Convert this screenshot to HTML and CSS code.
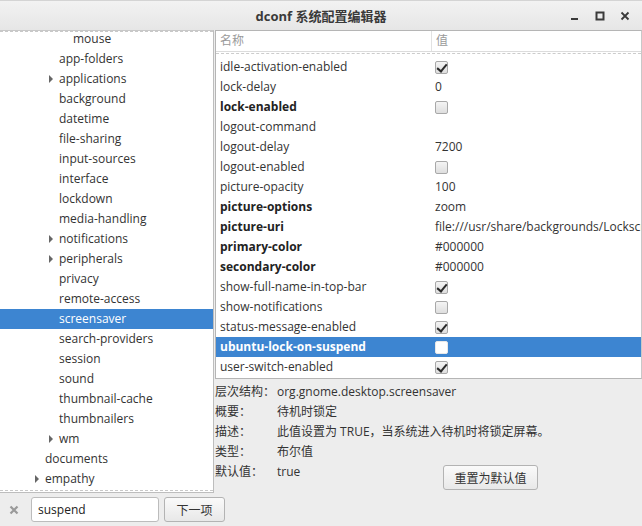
FILE: index.html
```html
<!DOCTYPE html>
<html>
<head>
<meta charset="utf-8">
<link rel="stylesheet" href="styles.css">
</head>
<body>
<div class="window">
  <div class="titlebar">
    <div class="title">dconf 系统配置编辑器</div>
    <div class="controls">
      <svg class="ctl" width="12" height="12" viewBox="0 0 12 12"><rect x="2" y="8" width="7" height="2" fill="#3a3a3a"/></svg>
      <svg class="ctl" width="12" height="12" viewBox="0 0 12 12"><rect x="2.5" y="2.5" width="7" height="7" fill="none" stroke="#3a3a3a" stroke-width="2"/></svg>
      <svg class="ctl" width="12" height="12" viewBox="0 0 12 12"><path d="M2.5 2.5 L9.5 9.5 M9.5 2.5 L2.5 9.5" stroke="#3a3a3a" stroke-width="1.8"/></svg>
    </div>
  </div>
  <div class="main">
    <div class="tree">
      <div class="tree-inner">
        <div class="row l4"><span class="exp"></span>mouse</div>
        <div class="row l3"><span class="exp"></span>app-folders</div>
        <div class="row l3"><span class="exp arrow"></span>applications</div>
        <div class="row l3"><span class="exp"></span>background</div>
        <div class="row l3"><span class="exp"></span>datetime</div>
        <div class="row l3"><span class="exp"></span>file-sharing</div>
        <div class="row l3"><span class="exp"></span>input-sources</div>
        <div class="row l3"><span class="exp"></span>interface</div>
        <div class="row l3"><span class="exp"></span>lockdown</div>
        <div class="row l3"><span class="exp"></span>media-handling</div>
        <div class="row l3"><span class="exp arrow"></span>notifications</div>
        <div class="row l3"><span class="exp arrow"></span>peripherals</div>
        <div class="row l3"><span class="exp"></span>privacy</div>
        <div class="row l3"><span class="exp"></span>remote-access</div>
        <div class="row l3 sel"><span class="exp"></span>screensaver</div>
        <div class="row l3"><span class="exp"></span>search-providers</div>
        <div class="row l3"><span class="exp"></span>session</div>
        <div class="row l3"><span class="exp"></span>sound</div>
        <div class="row l3"><span class="exp"></span>thumbnail-cache</div>
        <div class="row l3"><span class="exp"></span>thumbnailers</div>
        <div class="row l3"><span class="exp arrow"></span>wm</div>
        <div class="row l2"><span class="exp"></span>documents</div>
        <div class="row l2"><span class="exp arrow"></span>empathy</div>
      </div>
    </div>
    <div class="right">
      <div class="keys">
        <div class="head"><div class="c1">名称</div><div class="c2">值</div></div>
        <div class="krows">
          <div class="krow"><div class="c1">idle-activation-enabled</div><div class="c2"><span class="cb on"></span></div></div>
          <div class="krow"><div class="c1">lock-delay</div><div class="c2">0</div></div>
          <div class="krow b"><div class="c1">lock-enabled</div><div class="c2"><span class="cb"></span></div></div>
          <div class="krow"><div class="c1">logout-command</div><div class="c2"></div></div>
          <div class="krow"><div class="c1">logout-delay</div><div class="c2">7200</div></div>
          <div class="krow"><div class="c1">logout-enabled</div><div class="c2"><span class="cb"></span></div></div>
          <div class="krow"><div class="c1">picture-opacity</div><div class="c2">100</div></div>
          <div class="krow b"><div class="c1">picture-options</div><div class="c2 n">zoom</div></div>
          <div class="krow b"><div class="c1">picture-uri</div><div class="c2 n">file:///usr/share/backgrounds/Lockscreen.jpg</div></div>
          <div class="krow b"><div class="c1">primary-color</div><div class="c2 n">#000000</div></div>
          <div class="krow b"><div class="c1">secondary-color</div><div class="c2 n">#000000</div></div>
          <div class="krow"><div class="c1">show-full-name-in-top-bar</div><div class="c2"><span class="cb on"></span></div></div>
          <div class="krow"><div class="c1">show-notifications</div><div class="c2"><span class="cb"></span></div></div>
          <div class="krow"><div class="c1">status-message-enabled</div><div class="c2"><span class="cb on"></span></div></div>
          <div class="krow b sel"><div class="c1">ubuntu-lock-on-suspend</div><div class="c2"><span class="cb"></span></div></div>
          <div class="krow"><div class="c1">user-switch-enabled</div><div class="c2"><span class="cb on"></span></div></div>
        </div>
      </div>
      <div class="details">
        <div class="drow"><div class="dl">层次结构：</div><div class="dv">org.gnome.desktop.screensaver</div></div>
        <div class="drow"><div class="dl">概要：</div><div class="dv">待机时锁定</div></div>
        <div class="drow"><div class="dl">描述：</div><div class="dv">此值设置为 TRUE，当系统进入待机时将锁定屏幕。</div></div>
        <div class="drow"><div class="dl">类型：</div><div class="dv">布尔值</div></div>
        <div class="drow last"><div class="dl">默认值：</div><div class="dv short">true</div><button class="btn reset">重置为默认值</button></div>
      </div>
    </div>
  </div>
  <div class="bottom">
    <svg class="clear" width="12" height="12" viewBox="0 0 12 12"><path d="M2.5 2.5 L9.5 9.5 M9.5 2.5 L2.5 9.5" stroke="#9a9a9a" stroke-width="2.2"/></svg>
    <div class="entry">suspend</div>
    <button class="btn next">下一项</button>
  </div>
</div>
</body>
</html>
```

FILE: styles.css
```css
* { box-sizing: border-box; }
html, body { margin: 0; padding: 0; }
body {
  width: 642px;
  height: 526px;
  overflow: hidden;
  font-family: "Open Sans", "Noto Sans CJK SC", sans-serif;
  font-size: 12px;
  color: #333333;
  background: #ededed;
}
.window {
  width: 642px;
  height: 526px;
  display: flex;
  flex-direction: column;
  background: #ededed;
}
.titlebar {
  height: 30px;
  flex: none;
  display: flex;
  align-items: center;
  justify-content: center;
  position: relative;
  background: linear-gradient(#f2f2f2, #e6e6e6);
  border-top: 1px solid #d4d4d4;
}
.title {
  font-weight: bold;
  font-size: 13px;
  color: #3a3a3a;
}
.controls {
  position: absolute;
  right: 11px;
  top: 9px;
  display: flex;
  gap: 13px;
}
.ctl { display: block; }
.main {
  flex: 1;
  display: flex;
  min-height: 0;
}
.tree {
  width: 214px;
  flex: none;
  background: #ffffff;
  border: 1px solid #bdbdbd;
  border-left: none;
  border-top: 1px solid #c8c8c8;
  overflow: hidden;
  position: relative;
}
.tree::before, .tree::after {
  content: "";
  position: absolute;
  left: 0; right: 0;
  border-top: 1px dashed #c8c8c8;
  z-index: 1;
}
.tree::before { top: 0; }
.tree::after { bottom: 1px; }
.tree-inner { margin-top: -2px; }
.row {
  height: 20px;
  line-height: 20px;
  display: flex;
  align-items: center;
  white-space: nowrap;
  color: #333;
}
.row.l2 { padding-left: 31px; }
.row.l3 { padding-left: 45px; }
.row.l4 { padding-left: 59px; }
.exp {
  width: 14px;
  height: 20px;
  flex: none;
  position: relative;
}
.exp.arrow::before {
  content: "";
  position: absolute;
  left: 4px;
  top: 6px;
  border-left: 4px solid #666;
  border-top: 4px solid transparent;
  border-bottom: 4px solid transparent;
}
.row.sel { background: #3d85d1; color: #ffffff; }
.right {
  flex: 1;
  display: flex;
  flex-direction: column;
  margin-left: 1px;
  min-width: 0;
}
.keys {
  height: 349px;
  background: #ffffff;
  border: 1px solid #b5b5b5;
  border-right: 1px solid #c8c8c8;
  overflow: hidden;
  flex: none;
}
.head {
  height: 21px;
  display: flex;
  line-height: 20px;
  color: #9a9a9a;
  border-bottom: 1px solid #dcdcdc;
}
.head .c2 { border-left: 1px solid #e2e2e2; }
.c1 { width: 215px; flex: none; padding-left: 4px; white-space: nowrap; overflow: hidden; }
.c2 { flex: 1; padding-left: 4px; white-space: nowrap; overflow: hidden; display: flex; align-items: center; }
.krows {
  border-top: 1px dashed #cccccc;
  margin-top: 1px;
  padding-top: 3px;
}
.krow {
  height: 20px;
  line-height: 20px;
  display: flex;
  color: #333;
}
.krow.b .c1 { font-weight: bold; color: #222; }
.krow .c2.n { font-weight: normal; }
.krow.sel { background: #3d85d1; color: #ffffff; }
.krow.sel .c1 { color: #ffffff; }
.cb {
  display: inline-block;
  width: 13px;
  height: 13px;
  border: 1px solid #a8a8a8;
  border-radius: 2px;
  background: linear-gradient(#f4f4f4, #dedede);
  position: relative;
}
.cb.on::after {
  content: "";
  position: absolute;
  left: 3px;
  top: 0px;
  width: 4px;
  height: 8px;
  border-right: 2.4px solid #2a2a2a;
  border-bottom: 2.4px solid #2a2a2a;
  transform: rotate(40deg);
}
.krow.sel .cb { background: #ffffff; border-color: #e8e8e8; }
.details {
  padding-top: 3px;
}
.drow {
  height: 20px;
  line-height: 20px;
  display: flex;
  align-items: flex-start;
  white-space: nowrap;
}
.dl { width: 62px; flex: none; }
.dv { flex: none; }
.dv.short { width: 166px; }
.btn {
  font-family: "Open Sans", "Noto Sans CJK SC", sans-serif;
  font-size: 12px;
  color: #333;
  background: linear-gradient(#fafafa, #e8e8e8);
  border: 1px solid #b3b3b3;
  border-radius: 3px;
  padding: 0;
  margin: 0;
}
.reset {
  width: 95px;
  height: 25px;
  margin-top: 3px;
}
.bottom {
  height: 33px;
  flex: none;
  display: flex;
  align-items: center;
  padding-left: 8px;
}
.clear { flex: none; margin-right: 11px; margin-top: 1px; }
.entry {
  width: 128px;
  height: 25px;
  line-height: 23px;
  background: #ffffff;
  border: 1px solid #bcbcbc;
  border-radius: 3px;
  padding-left: 6px;
  color: #222;
}
.next {
  width: 61px;
  height: 25px;
  margin-left: 5px;
}
```
